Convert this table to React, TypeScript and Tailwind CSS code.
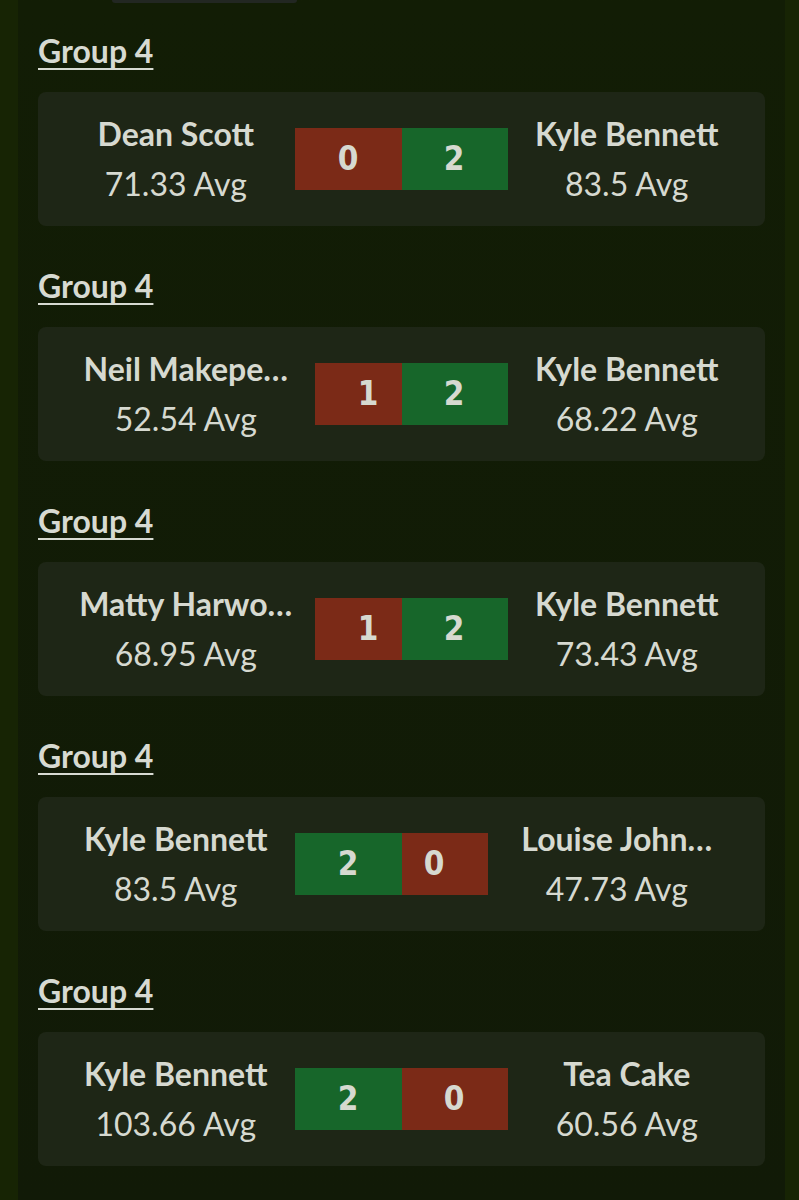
const matches = [
  { left: "Dean Scott", leftAvg: "71.33", right: "Kyle Bennett", rightAvg: "83.5", ls: 0, rs: 2, lw: "w-[107px]", rw: "w-[106px]" },
  { left: "Neil Makepe…", leftAvg: "52.54", right: "Kyle Bennett", rightAvg: "68.22", ls: 1, rs: 2, lw: "w-[87px]", rw: "w-[106px]" },
  { left: "Matty Harwo…", leftAvg: "68.95", right: "Kyle Bennett", rightAvg: "73.43", ls: 1, rs: 2, lw: "w-[87px]", rw: "w-[106px]" },
  { left: "Kyle Bennett", leftAvg: "83.5", right: "Louise John…", rightAvg: "47.73", ls: 2, rs: 0, lw: "w-[107px]", rw: "w-[86px]" },
  { left: "Kyle Bennett", leftAvg: "103.66", right: "Tea Cake", rightAvg: "60.56", ls: 2, rs: 0, lw: "w-[107px]", rw: "w-[106px]" },
];

function Player({ name, avg }: { name: string; avg: string }) {
  return (
    <div className="min-w-0 flex-1 text-center text-[32px] leading-[50px] text-[#d6d9d0]">
      <div className="truncate font-bold">{name}</div>
      <div className="truncate font-normal">{avg} Avg</div>
    </div>
  );
}

function Score({ value, win, width, side }: { value: number; win: boolean; width: string; side: "left" | "right" }) {
  return (
    <div
      className={`flex h-[62px] flex-none overflow-hidden ${width} ${win ? "bg-[#17662a]" : "bg-[#7b2a17]"} ${side === "left" ? "justify-start" : "justify-end"}`}
    >
      <div className="flex w-[107px] flex-none items-center justify-center font-['DejaVu_Sans',sans-serif] text-[33px] font-bold text-[#d6d9d0] [font-stretch:condensed]">
        {value}
      </div>
    </div>
  );
}

export default function App() {
  return (
    <div className="min-h-screen bg-[#172404] font-['Lato',sans-serif]">
      <div className="ml-[18px] mr-[14px] min-h-screen bg-gradient-to-b from-[#121d05] to-[#111a07] px-[20px]">
        <div className="ml-[74px] h-[3px] w-[185px] rounded-b-lg bg-[#222722]" />
        <div className="pt-[28px]">
          {matches.map((m, i) => (
            <section key={i} className="mb-[40px]">
              <h2 className="mb-[21px] text-[32px] font-bold leading-[40px] text-[#d7dad2] underline decoration-2 underline-offset-[5px]">
                Group 4
              </h2>
              <div className="grid h-[134px] grid-cols-2 items-center rounded-lg bg-[#1e2616] px-[19px]">
                <div className="flex items-center">
                  <Player name={m.left} avg={m.leftAvg} />
                  <Score value={m.ls} win={m.ls > m.rs} width={m.lw} side="left" />
                </div>
                <div className="flex items-center">
                  <Score value={m.rs} win={m.rs > m.ls} width={m.rw} side="right" />
                  <Player name={m.right} avg={m.rightAvg} />
                </div>
              </div>
            </section>
          ))}
        </div>
      </div>
    </div>
  );
}
